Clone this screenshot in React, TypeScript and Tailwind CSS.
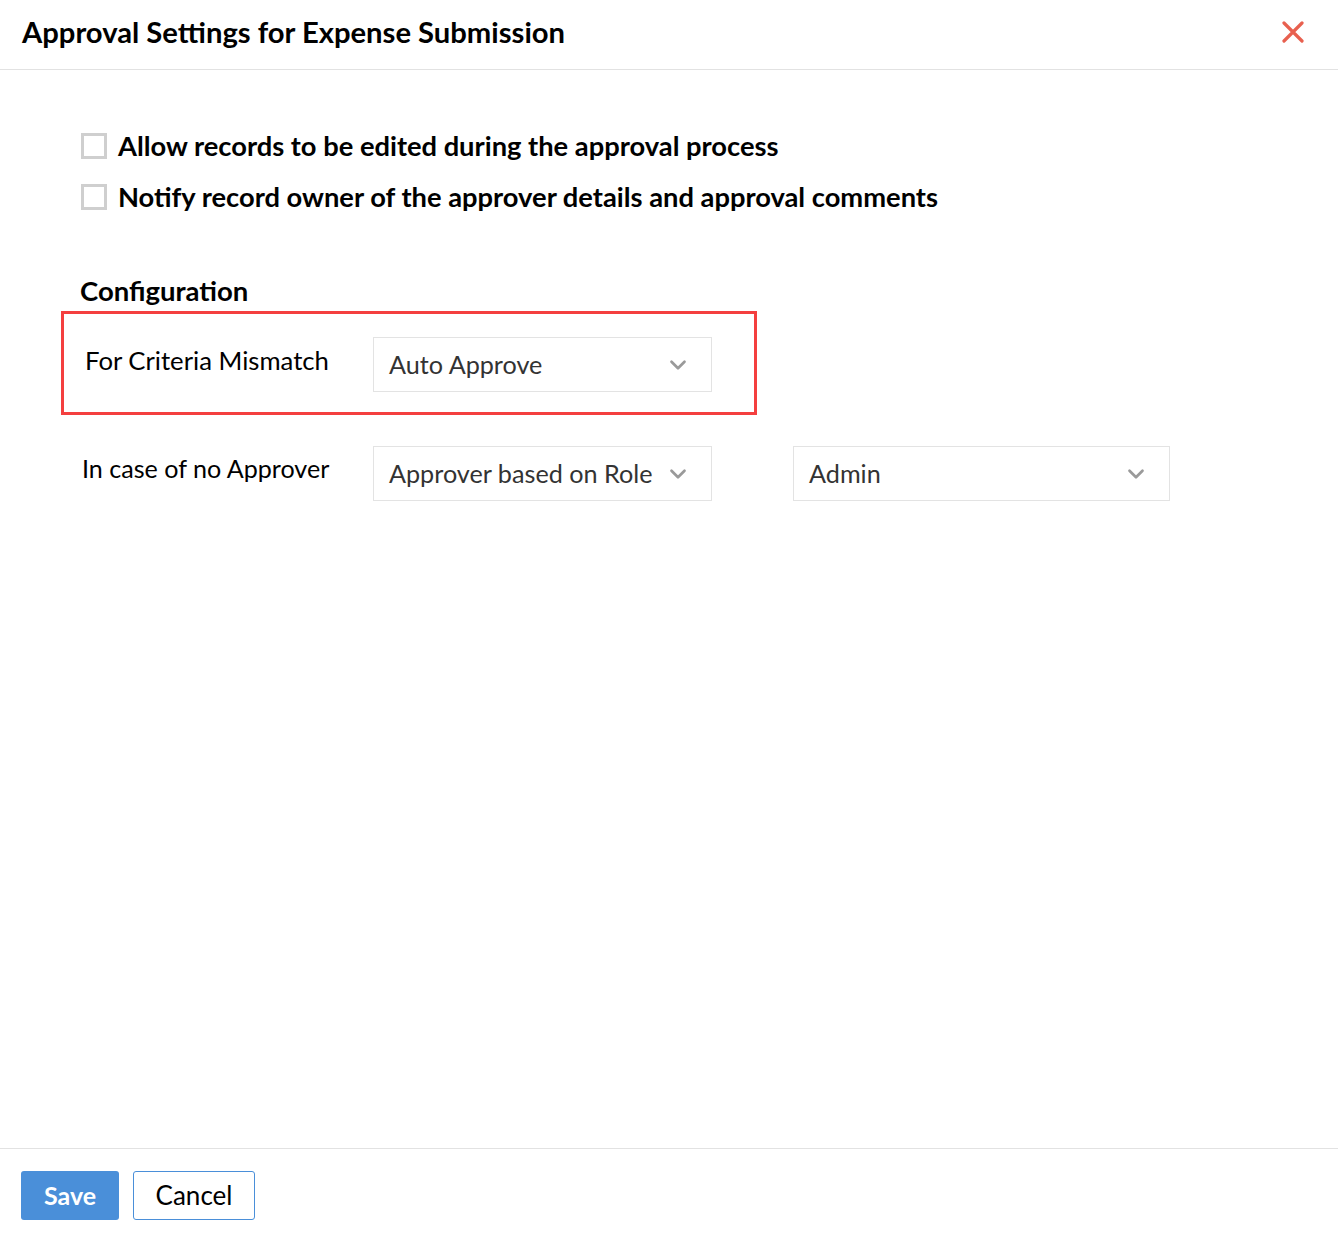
import { ChevronDown } from 'lucide-react'

function Checkbox({ label }: { label: string }) {
  return (
    <label className="flex items-center gap-[11px]">
      <span className="h-[26px] w-[26px] border-[3px] border-[#cfcfcf] bg-white" />
      <span className="text-[27.3px] leading-[32px] font-bold text-black">{label}</span>
    </label>
  )
}

function Select({ value, width }: { value: string; width: string }) {
  return (
    <div
      className={`flex h-[55px] items-center justify-between border border-[#e3e3e3] bg-white pl-[15px] pr-[20px] ${width}`}
    >
      <span className="text-[25.2px] text-[#333]">{value}</span>
      <ChevronDown className="h-[26px] w-[26px] text-[#9a9a9a]" strokeWidth={2.5} />
    </div>
  )
}

export default function App() {
  return (
    <div
      className="flex h-[1248px] w-[1338px] flex-col bg-white"
      style={{ fontFamily: 'Lato, "Open Sans", sans-serif' }}
    >
      <header className="flex h-[70px] items-center justify-between border-b border-[#e2e2e2] pl-[22px] pr-[34px]">
        <h1 className="-mt-[6px] text-[29.2px] font-bold text-black">Approval Settings for Expense Submission</h1>
        <svg width="22" height="22" viewBox="0 0 22 22" className="mt-[-6px]">
          <path d="M2 2 L20 20 M20 2 L2 20" stroke="#e8604f" strokeWidth="3.2" strokeLinecap="round" />
        </svg>
      </header>

      <main className="flex-1 pl-[61px] pt-[60px]">
        <div className="flex flex-col gap-[19px] pl-[20px]">
          <Checkbox label="Allow records to be edited during the approval process" />
          <Checkbox label="Notify record owner of the approver details and approval comments" />
        </div>

        <h2 className="mt-[62px] pl-[19px] text-[27.5px] leading-[32px] font-bold text-black">Configuration</h2>

        <div className="mt-[4px] flex h-[104px] w-[696px] items-center border-[3px] border-[#f43f3f] pl-[21px] pt-[3px]">
          <span className="w-[288px] -mt-[8px] text-[25.7px] text-black">For Criteria Mismatch</span>
          <Select value="Auto Approve" width="w-[339px]" />
        </div>

        <div className="mt-[31px] flex items-center pl-[21px]">
          <span className="w-[291px] -mt-[10px] text-[25.1px] text-black">In case of no Approver</span>
          <Select value="Approver based on Role" width="w-[339px]" />
          <div className="ml-[81px]">
            <Select value="Admin" width="w-[377px]" />
          </div>
        </div>
      </main>

      <footer className="flex h-[100px] items-start gap-[14px] border-t border-[#e2e2e2] pl-[21px] pt-[22px]">
        <button className="h-[49px] w-[98px] rounded-[3px] bg-[#4a8fd9] text-[25px] font-bold text-white">
          Save
        </button>
        <button className="h-[49px] w-[122px] rounded-[3px] border border-[#4a8fd9] bg-white text-[26px] text-black">
          Cancel
        </button>
      </footer>
    </div>
  )
}
